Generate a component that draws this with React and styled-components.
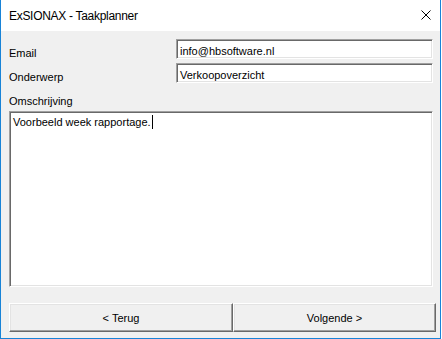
import React from "react";
import styled, { createGlobalStyle } from "styled-components";

const GlobalStyle = createGlobalStyle`
  html, body { margin: 0; padding: 0; background: #ffffff; }
  * { box-sizing: border-box; }
`;

const Window = styled.div`
  width: 441px;
  height: 339px;
  display: flex;
  flex-direction: column;
  border: 1px solid #1883d7;
  border-top: none;
  font-family: "Liberation Sans", Arial, sans-serif;
  color: #000;
`;

const TitleBar = styled.div`
  height: 31px;
  flex: none;
  display: flex;
  align-items: center;
  justify-content: space-between;
  padding: 1px 9px 0 8px;
  background: #ffffff;
`;

const Title = styled.span`
  font-size: 12px;
  letter-spacing: -0.3px;
  line-height: 14px;
`;

const CloseIcon = styled.svg`
  width: 10px;
  height: 10px;
  display: block;
  margin-top: -2px;
`;

const Body = styled.div`
  flex: 1;
  display: flex;
  flex-direction: column;
  background: #f0f0f0;
  padding: 8px 4px 5px 8px;
  font-size: 11px;
`;

const FormRow = styled.div`
  display: grid;
  grid-template-columns: 167px 257px;
  align-items: end;
  margin-top: ${(p) => p.$gap || 0}px;
`;

const Label = styled.div`
  line-height: 13px;
  margin-bottom: ${(p) => (p.$inline ? -1 : 0)}px;
  margin-top: ${(p) => p.$top || 0}px;
`;

const inset = `
  background: #ffffff;
  border-style: solid;
  border-width: 1px;
  border-color: #a0a0a0 #ffffff #ffffff #a0a0a0;
  box-shadow: inset 1px 1px 0 #696969, inset -1px -1px 0 #e3e3e3;
`;

const Field = styled.div`
  ${inset}
  height: 20px;
  padding: 4px 2px 0 3px;
  line-height: 14px;
  white-space: nowrap;
  overflow: hidden;
`;

const TextArea = styled.div`
  ${inset}
  width: 424px;
  height: 176px;
  margin-top: 3px;
  padding: 3px 2px 0 3px;
  line-height: 13px;
`;

const Caret = styled.span`
  display: inline-block;
  width: 1px;
  height: 14px;
  background: #000;
  margin-left: 1px;
  vertical-align: -3px;
`;

const ButtonRow = styled.div`
  display: grid;
  grid-template-columns: 224px 203px;
  margin-top: 16px;
`;

const Button = styled.button`
  height: 29px;
  font-family: "Liberation Sans", Arial, sans-serif;
  font-size: 11px;
  color: #000;
  background: #f0f0f0;
  border-style: solid;
  border-width: 1px;
  border-color: #ffffff #696969 #696969 #ffffff;
  box-shadow: inset -1px -1px 0 #a0a0a0, inset 1px 1px 0 #e3e3e3;
  padding: 1px 0 0 0;
  margin: 0;
`;

export default function App() {
  return (
    <>
      <GlobalStyle />
      <Window>
        <TitleBar>
          <Title>ExSIONAX - Taakplanner</Title>
          <CloseIcon viewBox="0 0 10 10">
            <path d="M0.5 0.5 L9.5 9.5 M9.5 0.5 L0.5 9.5" stroke="#000" strokeWidth="1" fill="none" />
          </CloseIcon>
        </TitleBar>
        <Body>
          <FormRow>
            <Label $inline>Email</Label>
            <Field>info@hbsoftware.nl</Field>
          </FormRow>
          <FormRow $gap={4}>
            <Label $inline>Onderwerp</Label>
            <Field>Verkoopoverzicht</Field>
          </FormRow>
          <Label $top={12}>Omschrijving</Label>
          <TextArea>
            Voorbeeld week rapportage.<Caret />
          </TextArea>
          <ButtonRow>
            <Button>&lt; Terug</Button>
            <Button>Volgende &gt;</Button>
          </ButtonRow>
        </Body>
      </Window>
    </>
  );
}
